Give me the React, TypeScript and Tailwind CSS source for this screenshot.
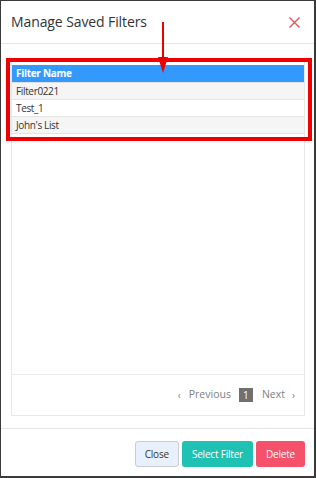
import React from "react";

export default function App() {
  const rows = ["Filter0221", "Test_1", "John's List"];
  return (
    <div
      className="relative w-[316px] h-[478px] bg-white border-t border-l border-r-2 border-b-2 border-[#3a3a3a] flex flex-col overflow-hidden"
      style={{ fontFamily: '"Open Sans", sans-serif' }}
    >
      {/* header */}
      <div className="h-[43px] shrink-0 border-b border-[#e6e6e6] flex items-center justify-between pl-[10px] pr-[14px]">
        <span className="text-[14px] tracking-[-0.1px] text-[#333] leading-none">Manage Saved Filters</span>
        <svg width="11" height="11" viewBox="0 0 11 11" className="mt-[1px]">
          <path d="M0.5 0.5 L10.5 10.5 M10.5 0.5 L0.5 10.5" stroke="#e05555" strokeWidth="1.4" />
        </svg>
      </div>

      {/* body */}
      <div className="flex-1 flex flex-col pt-[17px] pb-[12px] pl-[10px] pr-[9px]">
        <div className="flex-1 flex flex-col border border-[#e8e8e8]">
          <div className="pt-[3px]">
            <div className="h-[18px] bg-[#3399ff] flex items-center pl-[4px] text-[10px] tracking-[-0.3px] font-bold text-white border-b border-[#e0e0e0]">
              Filter Name
            </div>
            {rows.map((r, i) => (
              <div
                key={r}
                className={`h-[17px] flex items-center pl-[4px] text-[10px] tracking-[-0.35px] text-[#333] border-b border-[#e4e4e4] ${
                  i % 2 === 0 ? "bg-[#f5f5f5]" : "bg-white"
                }`}
              >
                {r}
              </div>
            ))}
          </div>
          <div className="flex-1" />
          <div className="h-[41px] border-t border-[#ececec] flex items-center justify-end pr-[9px] text-[10.5px] text-[#808080]">
            <span className="mr-[8px] text-[10px]">&#8249;</span>
            <span className="mr-[8px]">Previous</span>
            <span className="w-[14px] h-[14px] bg-[#707070] text-white flex items-center justify-center text-[10px] mr-[9px]">
              1
            </span>
            <span className="mr-[7px]">Next</span>
            <span className="text-[10px]">&#8250;</span>
          </div>
        </div>
      </div>

      {/* footer */}
      <div className="h-[48px] shrink-0 border-t border-[#e6e6e6] flex items-center justify-end gap-[3px] pr-[9px] pt-[3px]">
        <button className="h-[26px] px-[9px] rounded-[3px] border border-[#c8ccd2] bg-[#e8f1fb] text-[10px] tracking-[-0.2px] text-[#333]">
          Close
        </button>
        <button className="h-[26px] px-[10px] rounded-[3px] bg-[#1fc1b3] text-[10px] tracking-[-0.2px] text-white">
          Select Filter
        </button>
        <button className="h-[26px] px-[10px] rounded-[3px] bg-[#f5516b] text-[10px] tracking-[-0.2px] text-white">
          Delete
        </button>
      </div>

      {/* annotation overlay */}
      <div className="absolute left-[5px] top-[57px] w-[306px] h-[83px] border-[4px] border-[#f00000] pointer-events-none" />
      <svg className="absolute left-[155px] top-[20px] pointer-events-none" width="14" height="54" viewBox="0 0 14 54">
        <line x1="7" y1="1" x2="7" y2="40" stroke="#ee0000" strokeWidth="2" />
        <polygon points="2,36 12,36 7,52" fill="#ee0000" />
      </svg>
    </div>
  );
}
